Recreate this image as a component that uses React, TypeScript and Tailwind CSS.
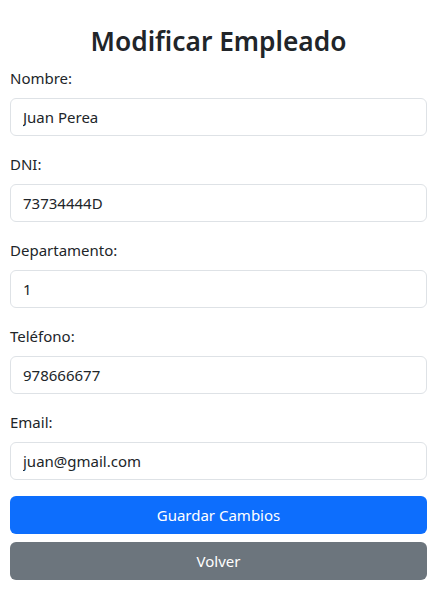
import React from "react";

const fields = [
  { label: "Nombre:", value: "Juan Perea" },
  { label: "DNI:", value: "73734444D" },
  { label: "Departamento:", value: "1" },
  { label: "Teléfono:", value: "978666677" },
  { label: "Email:", value: "juan@gmail.com" },
];

export default function App() {
  return (
    <div
      className="min-h-[614px] bg-white px-[10px] pt-[24px] text-[#212529]"
      style={{ fontFamily: '"Noto Sans", "Open Sans", sans-serif' }}
    >
      <h2 className="mb-2 text-center text-[26.3px] font-semibold leading-[34px]">
        Modificar Empleado
      </h2>
      {fields.map((f) => (
        <div key={f.label} className="mb-4">
          <label className="mb-2 block text-[15px] leading-[24px]">{f.label}</label>
          <input
            readOnly
            value={f.value}
            className="block h-[38px] w-full rounded-[6px] border border-[#dee2e6] bg-white px-3 text-[15px] leading-[24px] text-[#212529] outline-none"
          />
        </div>
      ))}
      <div className="flex flex-col gap-2">
        <button className="h-[38px] w-full rounded-[6px] bg-[#0d6efd] text-[15px] text-white">
          Guardar Cambios
        </button>
        <button className="h-[38px] w-full rounded-[6px] bg-[#6c757d] text-[15px] text-white">
          Volver
        </button>
      </div>
    </div>
  );
}
